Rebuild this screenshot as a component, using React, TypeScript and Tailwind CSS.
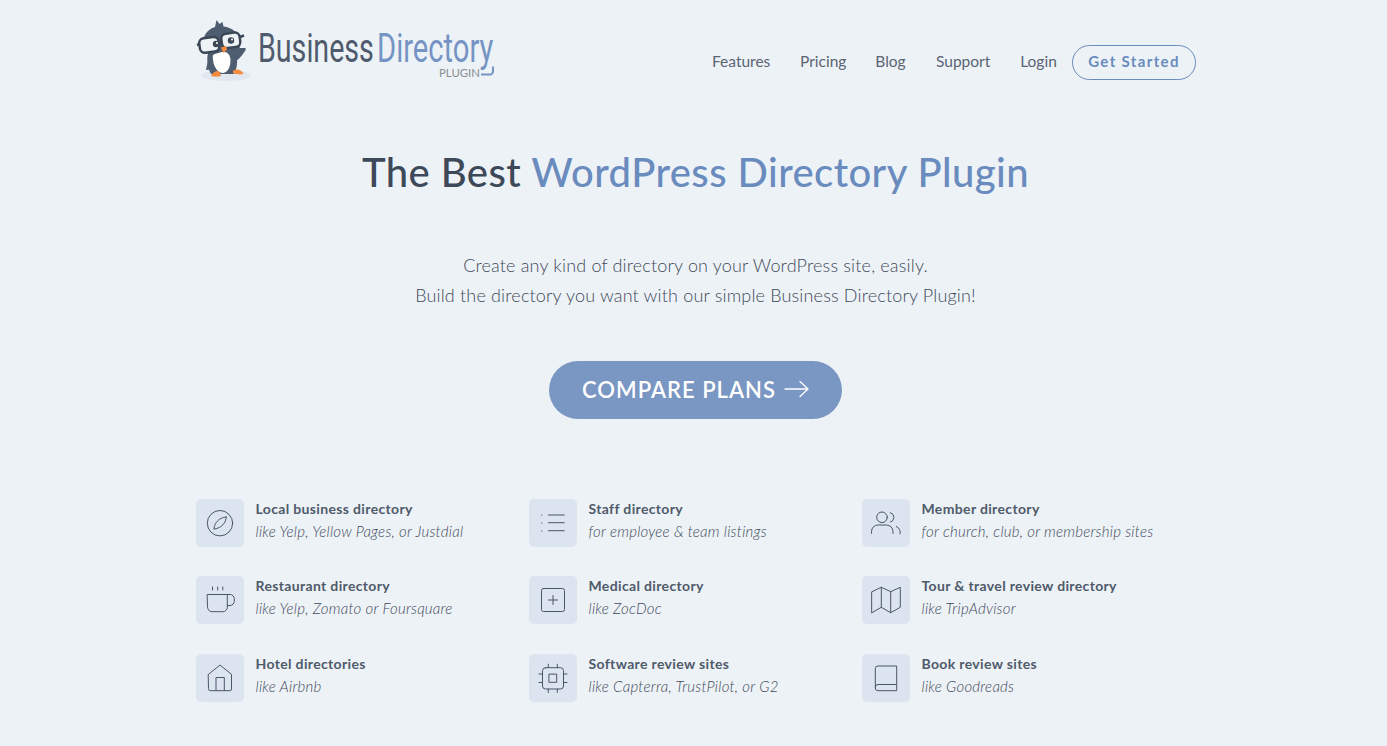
import React from "react";

const ic = { fill: "none", stroke: "#4a5568", strokeWidth: 1, strokeLinecap: "round" as const, strokeLinejoin: "round" as const };

const icons: Record<string, React.ReactNode> = {
  compass: (<><circle cx="24" cy="24.2" r="12.7" /><path d="M30.2 17.9c-.2 5.600-3.800 10.800-12.300 12.300.8-6.700 4.800-11.300 12.300-12.300z" /></>),
  coffee: (<><path d="M11.500 18.500h19.800v12.700a4.500 4.500 0 0 1-4.500 4.500H16a4.500 4.500 0 0 1-4.500-4.500z" /><path d="M31.300 18.500h2.700a4.300 4.300 0 0 1 4.300 4.300v2.400a4.300 4.300 0 0 1-4.300 4.300h-2.700" /><path d="M16.500 11v3M21.700 11v3M26.800 11v3" /></>),
  home: (<><path d="M12.500 20.300L24 11l11.500 9.300v14.700a1.700 1.700 0 0 1-1.700 1.700H14.200a1.700 1.700 0 0 1-1.700-1.700z" /><path d="M20 36.500V23.500h8.300v13" /></>),
  list: (<><path d="M19.500 16h15.800M19.500 23.700h15.800M19.500 31.700h15.800" /><path d="M12.700 16v.3M12.700 23.700v.3M12.700 31.700v.3" /></>),
  plus: (<><rect x="12.500" y="12.500" width="23" height="23" rx="2" /><path d="M24 19.500v9M19.500 24h9" /></>),
  chip: (<><rect x="13.500" y="13.700" width="21" height="21.300" rx="3" /><rect x="20.300" y="20.100" width="7.400" height="8.200" /><path d="M19.300 10.200v3.500M28.300 10.200v3.500M19.300 35v3.500M28.300 35v3.500M10 20h3.500M10 28.500h3.500M34.500 20H38M34.500 28.500H38" /></>),
  users: (<><circle cx="20" cy="18.300" r="5.300" /><path d="M9.500 34.300v-1.800a6.500 6.500 0 0 1 6.500-6.500h8.500a6.500 6.500 0 0 1 6.500 6.500v2" /><path d="M28.300 13.600a5 5 0 0 1 0 9.600M34.300 27.500a6 6 0 0 1 3.800 7.300" /></>),
  map: (<><path d="M10 15.700l9.300-4.400 9.400 4.400 9.600-4.400v20l-9.600 5.400-9.400-5.400-9.300 5.400z" /><path d="M19.300 11.300v20M28.700 15.700v21" /></>),
  book: (<><path d="M34.300 12H16a2.700 2.700 0 0 0-2.700 2.700v19.300a2.700 2.700 0 0 0 2.700 2.700h18.300z" /><path d="M34.300 30.500H16a2.700 2.700 0 0 0-2.700 2.700" /></>),
};

const items = [
  ["compass", "Local business directory", "like Yelp, Yellow Pages, or Justdial"],
  ["list", "Staff directory", "for employee & team listings"],
  ["users", "Member directory", "for church, club, or membership sites"],
  ["coffee", "Restaurant directory", "like Yelp, Zomato or Foursquare"],
  ["plus", "Medical directory", "like ZocDoc"],
  ["map", "Tour & travel review directory", "like TripAdvisor"],
  ["home", "Hotel directories", "like Airbnb"],
  ["chip", "Software review sites", "like Capterra, TrustPilot, or G2"],
  ["book", "Book review sites", "like Goodreads"],
];

function Logo() {
  return (
    <svg width="300" height="70" viewBox="196 15 300 70" className="block">
      <ellipse cx="226" cy="75.500" rx="25" ry="5.500" fill="#e1e7ef" />
      <path d="M234 47c4 1 8 1 11 1 1 0 1 2 0 3-3 5-7 9-11 11z" fill="#4f5d70" />
      <path d="M213 52c-4 5-6 11-7 18 3 0 6-1 8-3z" fill="#4f5d70" />
      <path d="M209 50h26c3 7 3 17-1 24h-23c-4-7-5-17-2-24z" fill="#4f5d70" />
      <path d="M215 27l1.500-7 3 4 3-2 1 4.500c9 1 16 7 17 15 1 9-7 16-18 16-11 0-18-6-19-14-1-8 4-14 11.500-16.500z" fill="#4f5d70" />
      <path d="M213 55c2-1 7-3 11-3 4 0 6 3 6.500 8 0 6-2 12-7.500 13-5 0-8-5-9.500-10-.5-3-1-6-.5-8z" fill="#fff" />
      <g fill="#eef2f6" stroke="#3b4656" strokeWidth="2.500">
        <rect x="199.500" y="37.500" width="19.500" height="14.500" rx="5" transform="rotate(-8 210 45)" />
        <rect x="221.500" y="33" width="18.500" height="14.500" rx="5" transform="rotate(-8 231 40)" />
      </g>
      <path d="M219 43l3-1M240 37l4-1.500M200 44l-3 1" fill="none" stroke="#3b4656" strokeWidth="2.500" />
      <circle cx="216" cy="44" r="3.200" fill="#3b4656" />
      <circle cx="231" cy="40.500" r="3.200" fill="#3b4656" />
      <circle cx="217" cy="43" r="1" fill="#fff" />
      <circle cx="232" cy="39.500" r="1" fill="#fff" />
      <path d="M221 47.500l5-1.500 1 3.500-3.500 3.500z" fill="#f58a3c" />
      <path d="M211 76c1-3 4-5 7-5 2 1 3 4 3 5-3 1-7 1-10 0z" fill="#f58a3c" />
      <path d="M233 71c2-2 6-2 8 0 2 1 3 3 2 3-3 1-8 0-10-1z" fill="#f58a3c" />
      <text transform="translate(258 62) scale(0.716 1)" fontFamily="Roboto, sans-serif" fontSize="40" fill="#4f5b6c">Business</text>
      <text transform="translate(377 62) scale(0.729 1)" fontFamily="Roboto, sans-serif" fontSize="40" fill="#7594c3">Directory</text>
      <text x="439" y="77" fontFamily="Lato, sans-serif" fontSize="10.500" fill="#8a8f96" textLength="41" lengthAdjust="spacingAndGlyphs">PLUGIN</text>
      <path d="M481 74.500h9a3 3 0 0 0 3-3v-5" fill="none" stroke="#7594c3" strokeWidth="2" />
    </svg>
  );
}

export default function App() {
  return (
    <div className="min-h-[746px] bg-[#edf2f7] text-[#4a5568] font-['Lato','Noto_Sans',sans-serif] overflow-hidden">
      <div className="w-[1000px] ml-[196px]">
        <header className="flex justify-between pt-[15px]">
          <Logo />
          <nav className="flex items-center h-[35px] mt-[30px] text-[15.500px] text-[#5a6473]">
            <a className="w-[58px] text-center pb-[2px]">Features</a>
            <a className="ml-[30px] w-[45px] text-center pb-[2px]">Pricing</a>
            <a className="ml-[30px] w-[31px] text-center pb-[2px]">Blog</a>
            <a className="ml-[30px] w-[54px] text-center pb-[2px]">Support</a>
            <a className="ml-[30px] w-[37px] text-center pb-[2px]">Login</a>
            <a className="ml-[15px] w-[124px] h-[35px] pb-[2px] flex items-center justify-center rounded-full border border-[#6a8bbd] text-[#6a8bbd] font-bold tracking-[1.35px] text-[15px]">Get Started</a>
          </nav>
        </header>

        <h1 className="mt-[59px] text-center text-[40px] leading-[56px] font-medium tracking-[0.43px] text-[#3d4858] pr-px">
          The Best <span className="text-[#6a8bbd]">WordPress Directory Plugin</span>
        </h1>

        <p className="mt-[50px] text-center text-[18px] leading-[30px] tracking-[0.17px] font-light text-[#3f4a5a] pr-px">
          Create any kind of directory on your WordPress site, easily.
          <br />
          Build the directory you want with our simple Business Directory Plugin!
        </p>

        <div className="mt-[51px] flex justify-center pr-px">
          <a className="w-[293px] h-[58px] pb-[2px] rounded-full bg-[#7a96c2] text-white flex items-center justify-center gap-[8px] text-[22px] font-semibold tracking-[1px]">
            COMPARE PLANS
            <svg width="25" height="18" viewBox="0 0 25 18" fill="none" stroke="#fff" strokeWidth="1.300" strokeLinecap="round" strokeLinejoin="round">
              <path d="M1 9h23M16 1.500L24 9l-8 7.500" />
            </svg>
          </a>
        </div>

        <div className="mt-[79.600px] grid grid-cols-[333px_333px_334px] gap-y-[29.500px]">
          {items.map(([icon, title, sub]) => (
            <div key={title} className="flex gap-[11.500px]">
              <div className="w-12 h-12 rounded-[5px] bg-[#dce4ef] shrink-0">
                <svg width="48" height="48" viewBox="0 0 48 48" {...ic}>{icons[icon]}</svg>
              </div>
              <div>
                <div className="text-[14px] leading-[20px] font-bold tracking-[0.35px] text-[#4f5a6a]">{title}</div>
                <div className="mt-[2px] text-[15px] leading-[20px] italic font-light tracking-[0.25px] text-[#3f4a5a]">{sub}</div>
              </div>
            </div>
          ))}
        </div>
      </div>
    </div>
  );
}
